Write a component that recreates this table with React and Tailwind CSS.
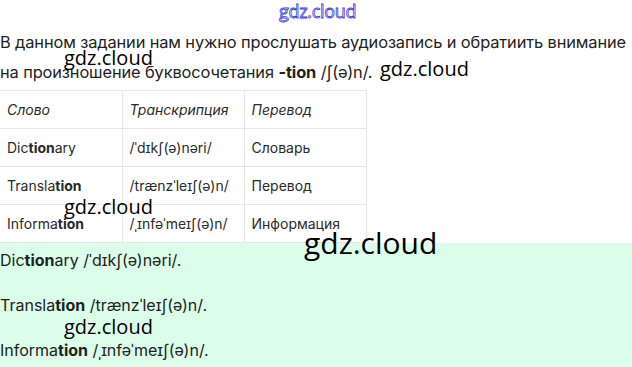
export default function App() {
  const rows = [
    { word: ["Dic", "tion", "ary"], tr: "/ˈdɪkʃ(ə)nəri/", ru: "Словарь" },
    { word: ["Transla", "tion", ""], tr: "/trænzˈleɪʃ(ə)n/", ru: "Перевод" },
    { word: ["Informa", "tion", ""], tr: "/ˌɪnfəˈmeɪʃ(ə)n/", ru: "Информация" },
  ];

  return (
    <div className="relative w-[632px] h-[367px] overflow-hidden bg-white text-[#222] font-['Inter',sans-serif]">
      {/* top outlined watermark */}
      <div className="absolute left-[279px] top-[0px] text-[18px] leading-[22px] font-['Open_Sans',sans-serif] text-white [-webkit-text-stroke:0.8px_#3a3ae0] tracking-[-0.3px]">
        gdz.cloud
      </div>

      <div className="flex flex-col pt-[27px]">
        <p className="text-[16.4px] leading-[30px] tracking-[-0.12px]">
          В данном задании нам нужно прослушать аудиозапись и обратиить внимание
          <br />
          на произношение буквосочетания <b>-tion</b> /ʃ(ə)n/.
        </p>

        <table className="self-start w-[366px] table-fixed mt-[3px] border-collapse text-[14px] text-[#2a2a2a]">
          <thead>
            <tr className="h-[38px]">
              <th className="w-[122px] border border-[#e6e6e6] border-l-0 px-[7px] text-left font-normal italic">Слово</th>
              <th className="w-[122px] border border-[#e6e6e6] px-[7px] text-left font-normal italic">Транскрипция</th>
              <th className="w-[122px] border border-[#e6e6e6] px-[7px] text-left font-normal italic">Перевод</th>
            </tr>
          </thead>
          <tbody>
            {rows.map((r) => (
              <tr key={r.ru} className="h-[38px]">
                <td className="border border-[#e6e6e6] border-l-0 px-[7px]">
                  {r.word[0]}
                  <b>{r.word[1]}</b>
                  {r.word[2]}
                </td>
                <td className="border border-[#e6e6e6] px-[7px] whitespace-nowrap">{r.tr}</td>
                <td className="border border-[#e6e6e6] px-[7px]">{r.ru}</td>
              </tr>
            ))}
          </tbody>
        </table>

        <div className="flex flex-col gap-[21px] bg-[#dcfde9] h-[130px] pt-[5px] text-[16px]">
          {rows.map((r) => (
            <p key={r.ru} className="leading-[24px]">
              {r.word[0]}
              <b>{r.word[1]}</b>
              {r.word[2]} {r.tr}.
            </p>
          ))}
        </div>
      </div>

      {/* black watermarks */}
      <div className="absolute left-[64px] top-[46px] text-[20px] leading-[24px] font-['Open_Sans',sans-serif] text-black">gdz.cloud</div>
      <div className="absolute left-[380px] top-[57px] text-[20px] leading-[24px] font-['Open_Sans',sans-serif] text-black">gdz.cloud</div>
      <div className="absolute left-[64px] top-[195px] text-[20px] leading-[24px] font-['Open_Sans',sans-serif] text-black">gdz.cloud</div>
      <div className="absolute left-[304px] top-[225px] text-[30px] leading-[36px] font-['Open_Sans',sans-serif] text-black">gdz.cloud</div>
      <div className="absolute left-[64px] top-[315px] text-[20px] leading-[24px] font-['Open_Sans',sans-serif] text-black">gdz.cloud</div>
    </div>
  );
}
